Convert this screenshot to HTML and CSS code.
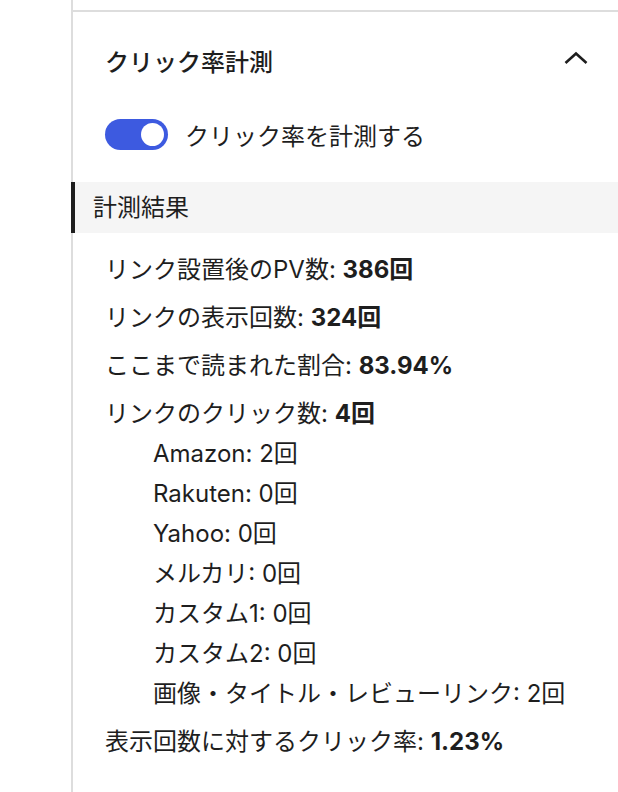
FILE: index.html
```html
<!DOCTYPE html>
<html lang="ja">
<head>
	<meta charset="utf-8">
	<title>クリック率計測</title>
	<link rel="stylesheet" href="styles.css">
</head>
<body>
	<div class="sidebar">
		<div class="prevPanel"></div>
		<div class="panel">
			<div class="panelHeader">
				<span class="panelTitle">クリック率計測</span>
				<svg class="chevron" width="24" height="14" viewBox="0 0 24 14">
					<polyline points="1.5,12 12,2.5 22.5,12" fill="none" stroke="#1e1e1e" stroke-width="2.6"/>
				</svg>
			</div>
			<div class="toggleRow">
				<span class="toggle"><span class="knob"></span></span>
				<span class="toggleLabel">クリック率を計測する</span>
			</div>
		</div>
		<div class="resultHead">計測結果</div>
		<ul class="results">
			<li>リンク設置後のPV数: <b>386回</b></li>
			<li>リンクの表示回数: <b>324回</b></li>
			<li>ここまで読まれた割合: <b>83.94%</b></li>
			<li>リンクのクリック数: <b>4回</b>
				<ul class="sub">
					<li>Amazon: 2回</li>
					<li>Rakuten: 0回</li>
					<li>Yahoo: 0回</li>
					<li>メルカリ: 0回</li>
					<li>カスタム1: 0回</li>
					<li>カスタム2: 0回</li>
					<li>画像・タイトル・レビューリンク: 2回</li>
				</ul>
			</li>
			<li>表示回数に対するクリック率: <b>1.23%</b></li>
		</ul>
	</div>
</body>
</html>
```
FILE: styles.css
```css
body{
	margin: 0;
	background: #fff;
	color: #1e1e1e;
	font-family: "Inter", "Noto Sans CJK JP", sans-serif;
	font-size: 24px;
}
.sidebar{
	margin-left: 71px;
	border-left: 2px solid #dddddd;
	min-height: 792px;
}
.prevPanel{
	height: 10px;
	border-bottom: 2px solid #dddddd;
}
.panel{
	padding: 0 30px 0 32px;
}
.panelHeader{
	height: 96px;
	display: flex;
	align-items: center;
	justify-content: space-between;
}
.panelTitle{
	font-weight: 500;
}
.chevron{
	display: block;
	margin-top: -4px;
}
.toggleRow{
	margin-top: 10px;
	height: 32px;
	display: flex;
	align-items: center;
	gap: 17px;
}
.toggle{
	width: 63px;
	height: 31px;
	border-radius: 16px;
	background: #3d5ae0;
	display: flex;
	align-items: center;
	justify-content: flex-end;
	padding-right: 4px;
	box-sizing: border-box;
}
.knob{
	width: 23px;
	height: 23px;
	border-radius: 50%;
	background: #fff;
}
.resultHead{
	margin-top: 32px;
	margin-left: -2px;
	height: 51px;
	line-height: 51px;
	background: #f5f5f5;
	border-left: 4px solid #1e1e1e;
	padding-left: 18px;
}
.results{
	list-style: none;
	margin: 17px 0 0;
	padding: 0 0 0 32px;
}
.results li{
	line-height: 40px;
	margin-bottom: 8px;
}
.results b{
	font-weight: 700;
}
.sub{
	list-style: none;
	margin: 0;
	padding-left: 48px;
}
.sub li{
	margin-bottom: 0;
}
```
